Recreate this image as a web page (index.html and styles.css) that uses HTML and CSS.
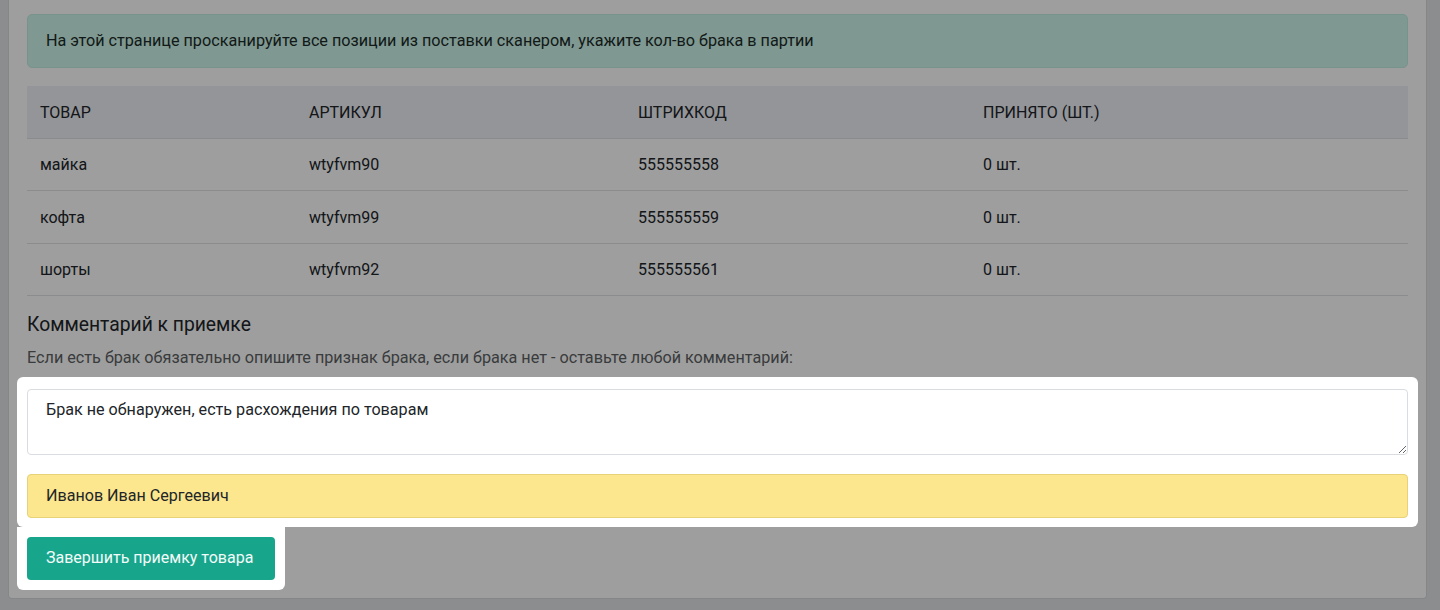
FILE: index.html
```html
<!DOCTYPE html>
<html lang="ru">
<head>
  <meta charset="UTF-8" />
  <meta name="viewport" content="width=device-width, initial-scale=1.0" />
  <title>Приемка товара</title>
  <link rel="stylesheet" href="styles.css">
</head>
<body>

  <div class="page">
    <div class="card">

      <div class="alert">
        На этой странице просканируйте все позиции из поставки сканером, укажите кол-во брака в партии
      </div>

      <!-- Items in the delivery -->
      <table class="items">
        <colgroup>
          <col style="width: 269px">
          <col style="width: 329px">
          <col style="width: 345px">
          <col>
        </colgroup>
        <thead>
          <tr>
            <th>Товар</th>
            <th>Артикул</th>
            <th>Штрихкод</th>
            <th>Принято (шт.)</th>
          </tr>
        </thead>
        <tbody>
          <tr>
            <td>майка</td>
            <td>wtyfvm90</td>
            <td>555555558</td>
            <td>0 шт.</td>
          </tr>
          <tr>
            <td>кофта</td>
            <td>wtyfvm99</td>
            <td>555555559</td>
            <td>0 шт.</td>
          </tr>
          <tr>
            <td>шорты</td>
            <td>wtyfvm92</td>
            <td>555555561</td>
            <td>0 шт.</td>
          </tr>
        </tbody>
      </table>

      <!-- Comment -->
      <h4 class="section-title">Комментарий к приемке</h4>
      <p class="hint">Если есть брак обязательно опишите признак брака, если брака нет - оставьте любой комментарий:</p>

      <div class="tour-focus tour-focus-form">
        <textarea id="comment" rows="2">Брак не обнаружен, есть расхождения по товарам</textarea>
        <input id="employee" class="employee" value="Иванов Иван Сергеевич" />
      </div>

      <div class="tour-focus tour-focus-btn">
        <button id="finishBtn" class="btn-finish">Завершить приемку товара</button>
      </div>

    </div>
  </div>

  <!-- Guided tour dimming layer -->
  <div class="tour-backdrop"></div>

</body>
</html>
```

FILE: styles.css
```css
* {
  box-sizing: border-box;
}

body {
  margin: 0;
  font-family: Roboto, "Noto Sans", sans-serif;
  font-size: 16px;
  line-height: 24px;
  color: #212529;
  background: #e3e4e6;
}

.page {
  padding: 0 13px 12px 8px;
}

.card {
  background: #fff;
  border: 1px solid #d6d8db;
  border-top: 0;
  border-radius: 0 0 4px 4px;
  padding: 14px 18px 8px 18px;
}

.alert {
  background: #cdf6ec;
  border: 1px solid #bfeee2;
  border-radius: 5px;
  padding: 14px 18px;
  color: #1c2b27;
  font-size: 16.2px;
}

.items {
  width: 100%;
  margin-top: 18px;
  border-collapse: collapse;
  table-layout: fixed;
}

.items th,
.items td {
  text-align: left;
  font-weight: 400;
  padding: 14.5px 13px 13px 13px;
  border-bottom: 1px solid #e1e3e6;
}

.items th {
  background: #edf0f5;
  text-transform: uppercase;
  border-bottom: 1px solid #dde1e6;
}

.section-title {
  margin: 15px 0 0 0;
  font-size: 19.3px;
  font-weight: 400;
  line-height: 28px;
}

.hint {
  margin: 7px 0 0 0;
  color: #5c5f63;
  font-size: 16.2px;
}

/* highlighted blocks sit above the tour backdrop */
.tour-focus {
  position: relative;
  z-index: 11;
  background: #fff;
  margin: 0 -10px;
  border-radius: 6px;
}

.tour-focus-form {
  margin-top: 7px;
  padding: 12px 10px 9px 10px;
}

.tour-focus-btn {
  display: inline-block;
  padding: 10px;
  border-radius: 0 0 6px 6px;
}

textarea {
  display: block;
  width: 100%;
  height: 66px;
  padding: 8px 18px;
  font-family: inherit;
  font-size: 16.15px;
  line-height: 24px;
  color: #212529;
  border: 1px solid #d9dce0;
  border-radius: 4px;
  resize: vertical;
}

.employee {
  display: block;
  width: 100%;
  margin-top: 19px;
  padding: 9px 18px;
  font-family: inherit;
  font-size: 16.1px;
  line-height: 24px;
  color: #212529;
  background: #fce68e;
  border: 1px solid #e8d178;
  border-radius: 4px;
}

.btn-finish {
  display: block;
  padding: 9px 22px 10px 19px;
  font-family: inherit;
  font-size: 16px;
  line-height: 24px;
  color: #f4fbf9;
  background: #17a68c;
  border: none;
  border-radius: 4px;
  cursor: pointer;
}

.tour-backdrop {
  position: fixed;
  inset: 0;
  z-index: 10;
  background: rgba(0, 0, 0, 0.38);
}
```
